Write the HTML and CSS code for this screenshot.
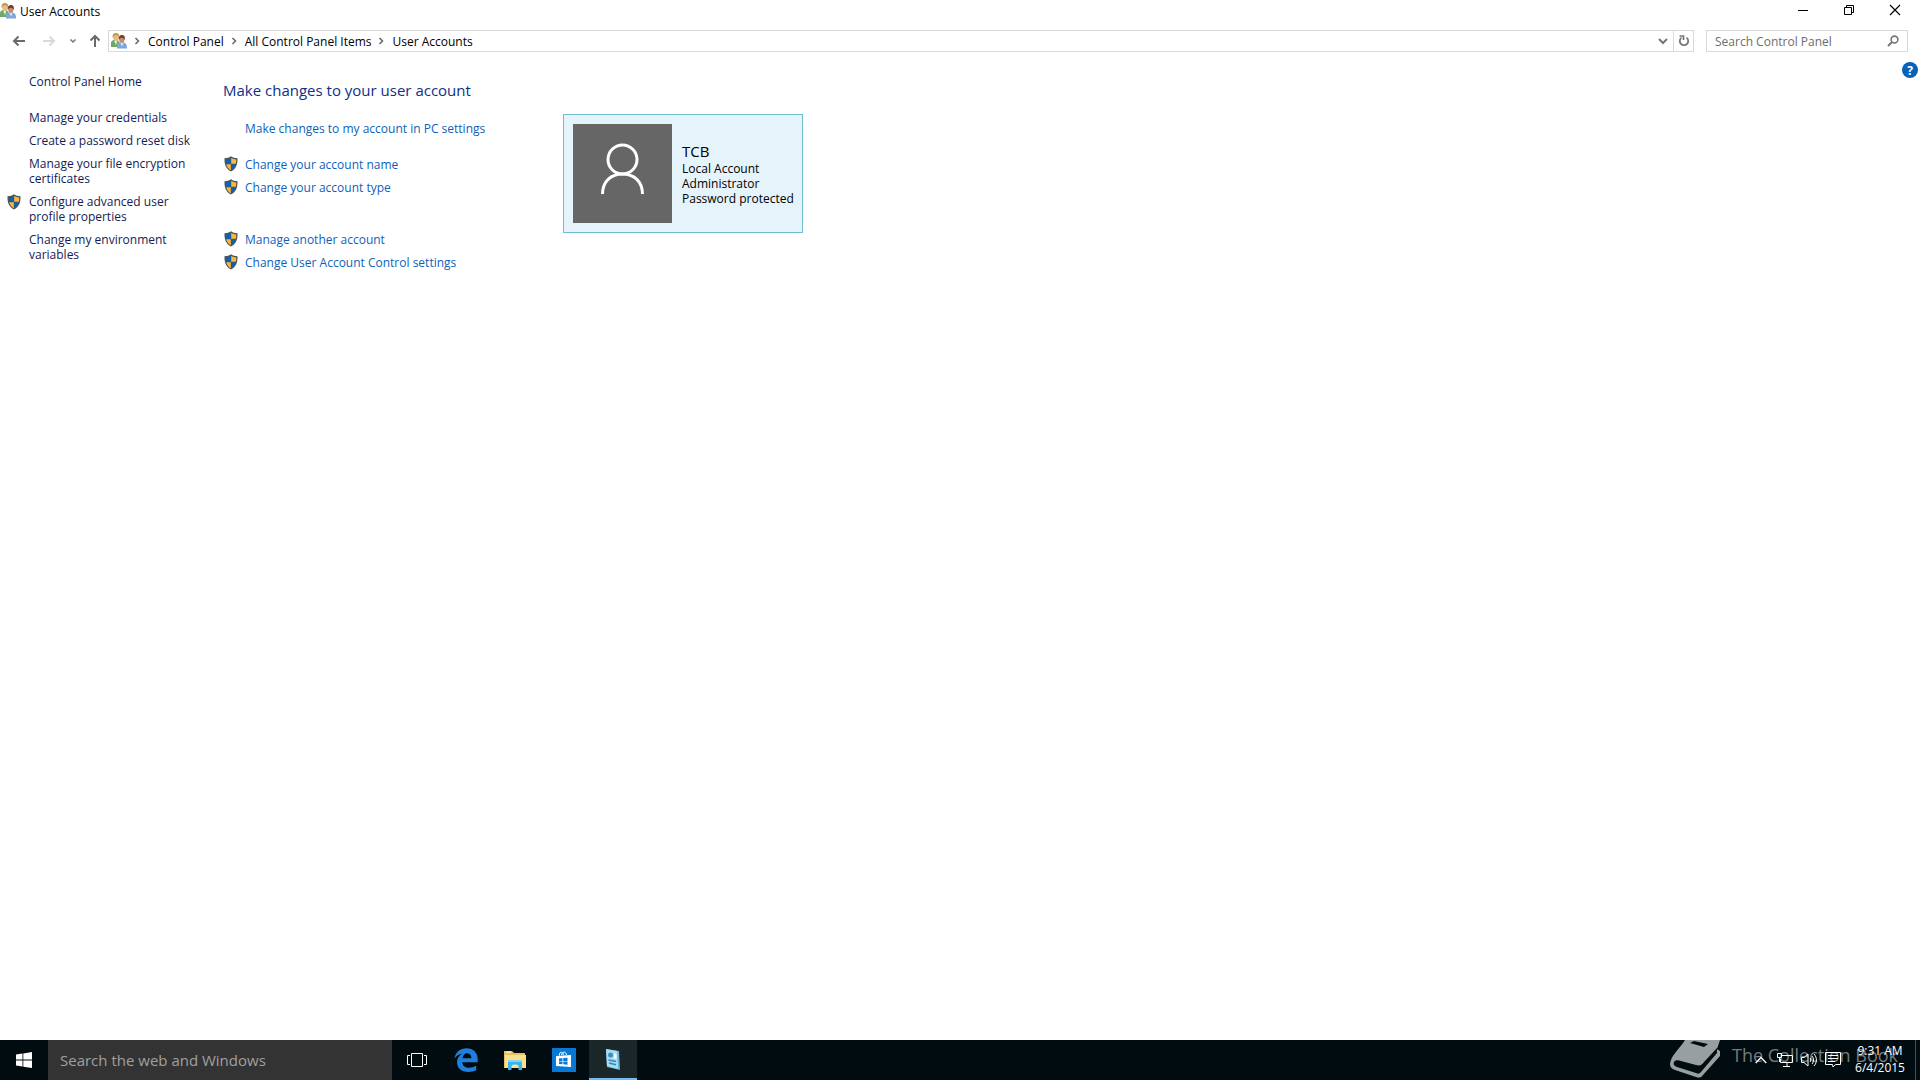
FILE: index.html
```html
<!DOCTYPE html>
<html lang="en">
<head>
<meta charset="utf-8">
<title>User Accounts</title>
<link rel="stylesheet" href="styles.css">
</head>
<body>
<svg class="defs" aria-hidden="true">
  <symbol id="shield" viewBox="0 0 14 16">
    <path d="M7 .3C5.600 1.600 3 2.300.5 2.300C.2 8.500 2 13 7 15.500C12 13 13.800 8.500 13.500 2.300C11 2.300 8.400 1.600 7 .3Z" fill="#4f5554"/>
    <path d="M6.800 2C5.400 2.900 3.500 3.400 1.800 3.500C1.700 5 1.800 6.500 2.200 7.800H6.800Z" fill="#0c62b4"/>
    <path d="M7.200 2C8.600 2.900 10.500 3.400 12.200 3.500C12.300 5 12.200 6.500 11.800 7.800H7.200Z" fill="#fcb63c"/>
    <path d="M2.300 8.200C3 10.900 4.400 12.900 6.800 14.200V8.200Z" fill="#fcb63c"/>
    <path d="M11.700 8.200C11 10.900 9.600 12.900 7.200 14.200V8.200Z" fill="#0c62b4"/>
  </symbol>
  <symbol id="users" viewBox="0 0 16 16">
    <path d="M0 14V9.500C.5 7.500 2.500 6.500 4.500 6.700C7 7 8.500 8 8.500 10V14Z" fill="#70a868"/>
    <path d="M3 7.500L5 12L6.500 7.500Z" fill="#e4efd8"/>
    <ellipse cx="5" cy="4" rx="3" ry="3.700" fill="#e8bd84"/>
    <path d="M1.800 5C1 2 2.600 0 5.200.1C7.600.2 8.700 2 8 4.400C7.500 2.800 6.500 2.200 5 2.300C3.300 2.300 2.300 3.200 1.800 5Z" fill="#c29a42"/>
    <path d="M6 15.500V12C6.500 10 8.500 9.300 11 9.300C14 9.400 16 11 16 14V15.500Z" fill="#7fa5dc"/>
    <path d="M9.400 9.800L11 13.500L12.600 9.800Z" fill="#e2ebf9"/>
    <ellipse cx="10.800" cy="6.500" rx="2.600" ry="3.400" fill="#c98c6a"/>
    <path d="M8 7C7.200 4.200 8.500 2 10.900 2C13.500 2 14.500 4.200 13.600 7.300C13.300 5.500 12.600 4.700 10.500 4.700C9.100 4.900 8.400 5.600 8 7Z" fill="#713e36"/>
  </symbol>
</svg>

<div class="window">
  <header class="titlebar">
    <svg class="ic16" aria-hidden="true"><use href="#users"/></svg>
    <h1 class="title">User Accounts</h1>
    <div class="window-buttons">
      <button class="wbtn" aria-label="Minimize"><svg width="12" height="12"><path d="M1 6.500H11" stroke="#000" fill="none"/></svg></button>
      <button class="wbtn" aria-label="Restore"><svg width="12" height="12"><path d="M1.500 3.500H8.500V10.500H1.500ZM3.500 3.500V1.500H10.500V8.500H8.500" stroke="#000" fill="none"/></svg></button>
      <button class="wbtn" aria-label="Close"><svg width="12" height="12"><path d="M1 1L11 11M11 1L1 11" stroke="#000" stroke-width="1.200" fill="none"/></svg></button>
    </div>
  </header>

  <nav class="navbar" aria-label="Address">
    <div class="history">
      <button class="hbtn back" aria-label="Back"><svg width="14" height="12"><path d="M13 6H2M6.500 1.500L2 6L6.500 10.500" stroke="#6a6a6a" stroke-width="2" fill="none"/></svg></button>
      <button class="hbtn forward" aria-label="Forward"><svg width="14" height="12"><path d="M1 6H12M7.500 1.500L12 6L7.500 10.500" stroke="#d9d9d9" stroke-width="2" fill="none"/></svg></button>
      <button class="hbtn recent" aria-label="Recent locations"><svg width="8" height="6"><path d="M1.500 1.500L4 4L6.500 1.500" stroke="#777" stroke-width="1.500" fill="none"/></svg></button>
      <button class="hbtn up" aria-label="Up"><svg width="12" height="14"><path d="M6 13V2M1.500 6.500L6 2L10.500 6.500" stroke="#6a6a6a" stroke-width="2" fill="none"/></svg></button>
    </div>
    <div class="address">
      <svg class="ic16" aria-hidden="true"><use href="#users"/></svg>
      <svg class="sep" viewBox="0 0 6 8"><path d="M1.500 1L4.500 4L1.500 7"/></svg>
      <a href="#">Control Panel</a>
      <svg class="sep" viewBox="0 0 6 8"><path d="M1.500 1L4.500 4L1.500 7"/></svg>
      <a href="#">All Control Panel Items</a>
      <svg class="sep" viewBox="0 0 6 8"><path d="M1.500 1L4.500 4L1.500 7"/></svg>
      <a href="#">User Accounts</a>
      <button class="abtn drop" aria-label="Previous locations"><svg width="10" height="7"><path d="M1 1L5 5L9 1" stroke="#777" stroke-width="2" fill="none"/></svg></button>
      <button class="abtn refresh" aria-label="Refresh"><svg width="12" height="12"><path d="M8.500 2.600A4.200 4.200 0 1 1 3.500 2.600" stroke="#777" stroke-width="1.800" fill="none"/><path d="M1.500 1H5.500V5" stroke="#777" stroke-width="1.700" fill="none"/></svg></button>
    </div>
    <label class="search">
      <input type="text" placeholder="Search Control Panel" aria-label="Search Control Panel">
      <svg width="12" height="12"><circle cx="7.500" cy="4.500" r="3.400" stroke="#777" stroke-width="1.600" fill="none"/><path d="M5 7L1 11" stroke="#777" stroke-width="2"/></svg>
    </label>
  </nav>

  <div class="content">
    <aside class="sidebar">
      <a class="home" href="#">Control Panel Home</a>
      <ul class="tasks">
        <li><a href="#">Manage your credentials</a></li>
        <li><a href="#">Create a password reset disk</a></li>
        <li><a href="#">Manage your file encryption<br>certificates</a></li>
        <li><svg class="shield" aria-hidden="true"><use href="#shield"/></svg><a href="#">Configure advanced user<br>profile properties</a></li>
        <li><a href="#">Change my environment<br>variables</a></li>
      </ul>
    </aside>
    <main class="main">
      <section class="actions">
        <h2>Make changes to your user account</h2>
        <ul class="links">
          <li><a href="#">Make changes to my account in PC settings</a></li>
        </ul>
        <ul class="links mid">
          <li><svg class="shield" aria-hidden="true"><use href="#shield"/></svg><a href="#">Change your account name</a></li>
          <li><svg class="shield" aria-hidden="true"><use href="#shield"/></svg><a href="#">Change your account type</a></li>
        </ul>
        <ul class="links last">
          <li><svg class="shield" aria-hidden="true"><use href="#shield"/></svg><a href="#">Manage another account</a></li>
          <li><svg class="shield" aria-hidden="true"><use href="#shield"/></svg><a href="#">Change User Account Control settings</a></li>
        </ul>
      </section>
      <section class="card">
        <svg class="avatar" viewBox="0 0 99 99" aria-hidden="true"><path d="M0 0H99V99H0Z" fill="#666"/><g fill="none" stroke="#fff" stroke-width="3"><circle cx="49.500" cy="35.500" r="14.500"/><path d="M29.500 70C29.500 57 38.500 50 49.500 50S69.500 57 69.500 70"/></g></svg>
        <div class="who">
          <h3>TCB</h3>
          <p>Local Account</p>
          <p>Administrator</p>
          <p>Password protected</p>
        </div>
      </section>
    </main>
    <button class="help" aria-label="Help">?</button>
  </div>
</div>

<footer class="taskbar">
  <button class="tbtn" aria-label="Start"><svg width="16" height="16"><path d="M0 2.400L6.500 1.500V7.600H0ZM7.300 1.400L16 0V7.600H7.300ZM0 8.400H6.500V14.500L0 13.600ZM7.300 8.400H16V16L7.300 14.700Z" fill="#fff"/></svg></button>
  <input class="websearch" type="text" placeholder="Search the web and Windows" aria-label="Search the web and Windows">
  <div class="apps">
    <button class="tbtn" aria-label="Task View"><svg width="20" height="14"><path d="M4.500.5H15.500V13.500H4.500ZM3 2.500H.5V11.500H3M17 2.500H19.500V11.500H17" fill="none" stroke="#fff"/></svg></button>
    <button class="tbtn" aria-label="Edge"><svg width="24" height="24" viewBox="0 0 24 24"><path d="M.5 10.500C1.600 3.800 6.500.3 12.500.3C19.300.3 23.700 4.900 23.700 11.300V14.300H8.300C8.600 18.200 11.500 19.800 15.200 19.800C17.800 19.800 20 19.100 22.200 17.800V22.300C19.900 23.500 17.300 24 14.400 24C7.500 24 3 20 3 14.200C3 10.500 5 7.400 8.100 5.700C4.900 6.200 2.300 7.700.5 10.500ZM8.500 10.200H17.400C17.400 7.400 16 5.200 13.200 5.200C10.700 5.200 8.900 7.200 8.500 10.200Z" fill="#1e7fdc"/></svg></button>
    <button class="tbtn" aria-label="File Explorer"><svg width="22" height="20"><path d="M0 1H8L10 3H21V18H0Z" fill="#e9c15c"/><path d="M2 1.500H7V3H2Z" fill="#f9efb5"/><path d="M1 5H22V18H1Z" fill="#fbe08d"/><path d="M4 10H18V20H14.500V16C14.500 14 7.500 14 7.500 16V20H4Z" fill="#38b5ed"/><path d="M4 10H18V12H4Z" fill="#83d4f7"/></svg></button>
    <button class="tbtn" aria-label="Store"><svg width="24" height="24"><path d="M0 0H24V24H0Z" fill="#0878d7"/><path d="M4 8L19 7V19L4 18Z" fill="#fff"/><path d="M7.500 7.500C7 3 11 3.500 11.500 7M9.500 7C10 3.500 14 3 14.500 7" stroke="#fff" fill="none"/><path d="M7 10.500L10.500 10.200V12.900H7ZM11.300 10.100L15.500 9.700V12.900H11.300ZM7 13.600H10.500V16.300L7 16ZM11.300 13.600H15.500V16.700L11.300 16.300Z" fill="#0878d7"/></svg></button>
    <button class="tbtn active" aria-label="User Accounts"><svg width="16" height="22"><path d="M1 1L14 3L15 22L2 19Z" fill="#6bb6d8"/><path d="M1 1L12 3L13 21L2 18Z" fill="#a9dcf0"/><circle cx="5.500" cy="7" r="2.500" fill="#398fc4"/><path d="M9 5.500L11.500 6V11L9 10.500Z" fill="#f6fbff"/><path d="M3.500 12L11 13.500M4 15L11 16.700" stroke="#3187b8" stroke-width="1.500"/></svg></button>
  </div>
  <div class="tray">
    <button class="tray-btn" aria-label="Show hidden icons"><svg width="12" height="8"><path d="M.7 7L6 1.500L11.300 7" stroke="#fff" stroke-width="1.300" fill="none"/></svg></button>
    <button class="tray-btn" aria-label="Network"><svg width="16" height="14"><path d="M4.500 2.500H15.500V9.500H3.500V6M10 10V13M6 13.500H13M.5.500H4.500V4.500H.5ZM2.500 5V9" stroke="#fff" fill="none"/></svg></button>
    <button class="tray-btn" aria-label="Volume"><svg width="16" height="14"><path d="M.5 4.500H3L7 1V13L3 9.500H.5ZM9 5C10 6.200 10 7.800 9 9M11 3C13 5.300 13 8.700 11 11M13 1C16.200 4.500 16.200 9.500 13 13" stroke="#fff" fill="none"/></svg></button>
    <button class="tray-btn" aria-label="Notifications"><svg width="16" height="16"><path d="M.5.500H15.500V12.500H10.500L8 15L7.500 12.500H.5ZM3 3.500H13M3 6.500H13M3 9.500H10" stroke="#fff" fill="none"/></svg></button>
    <div class="clock"><time>9:31 AM</time><time>6/4/2015</time></div>
    <button class="desktop" aria-label="Show desktop"></button>
  </div>
  <div class="watermark">
    <svg width="52" height="40" viewBox="0 0 52 40"><path d="M15 0H50L47 9L50 11V16L33 35C31 38 29 38 26 37L5 30C0 28-1 25 1 20C3 14 10 8 15 0Z" fill="#999fa0"/><path d="M4 22C5 20 8 20 11 21L26 25C30 26 32 25 34 22L47 8V13L31 32C29 34 28 34 26 33L7 27C4 26 3 24 4 22Z" fill="#000c0f"/><path d="M50 0V3L47 9L51 11V0Z" fill="#000c0f"/><path d="M20 3L24 1L38 4L34 7Z" fill="#000c0f"/></svg>
    <span>The Collection Book</span>
  </div>
</footer>
</body>
</html>
```
FILE: styles.css
```css
* { box-sizing: border-box; }
html, body { height: 100%; }
body {
  margin: 0;
  display: flex;
  flex-direction: column;
  background: #fff;
  color: #000;
  font: 12px/15px "Open Sans", "Noto Sans", sans-serif;
}
h1, h2, h3, p, ul { margin: 0; padding: 0; font-weight: 400; }
ul { list-style: none; }
a { color: inherit; text-decoration: none; }
button { border: 0; padding: 0; background: none; font: inherit; color: inherit; display: flex; align-items: center; justify-content: center; }
input { border: 0; padding: 0; background: none; font: inherit; outline: 0; min-width: 0; }
svg { display: block; flex: none; }
.defs { position: absolute; width: 0; height: 0; }
.ic16 { width: 16px; height: 16px; }
.shield { width: 14px; height: 16px; }

.window { flex: 1; display: flex; flex-direction: column; }

.titlebar { display: flex; align-items: center; height: 22px; }
.title { font-size: 12px; margin-left: 4px; }
.window-buttons { display: flex; margin-left: auto; margin-right: 2px; }
.wbtn { width: 46px; height: 20px; margin-bottom: 2px; }

.navbar { display: flex; align-items: center; padding: 8px 12px 0 0; height: 30px; }
.history { display: flex; align-items: center; width: 108px; padding-left: 12px; }
.hbtn { height: 20px; }
.forward { margin-left: 16px; }
.recent { margin-left: 13px; }
.up { margin-left: 12px; }
.address { flex: 1; display: flex; align-items: center; height: 22px; border: 1px solid #d9d9d9; padding-left: 2px; }
.sep { width: 6px; height: 8px; margin: 0 8px 0 7px; fill: none; stroke: #666; stroke-width: 1.500; }
.abtn { width: 20px; height: 20px; }
.drop { margin-left: auto; }
.refresh { border-left: 1px solid #d9d9d9; }
.search { display: flex; align-items: center; width: 202px; height: 22px; margin-left: 12px; padding: 0 8px; border: 1px solid #d9d9d9; }
.search input { flex: 1; }
.search input::placeholder { color: #6d6d6d; opacity: 1; }

.content { flex: 1; display: flex; align-items: flex-start; }
.sidebar { width: 223px; padding: 22px 0 0 29px; color: #151c55; }
.home { display: block; margin-bottom: 21px; }
.tasks { display: flex; flex-direction: column; gap: 8px; }
.tasks li { display: flex; }
.tasks .shield { margin-left: -22px; margin-right: 8px; }

.main { display: flex; align-items: flex-start; flex: 1; }
.actions { width: 340px; padding-top: 26px; color: #0f5fb8; }
.actions h2 { font-size: 15px; line-height: 24px; color: #0f2f87; margin-bottom: 18px; }
.links { display: flex; flex-direction: column; gap: 7px; padding-left: 22px; }
.links li { display: flex; align-items: center; height: 16px; }
.links .shield { margin-left: -21px; margin-right: 7px; }
.mid { margin-top: 20px; }
.last { margin-top: 36px; }
.card { display: flex; align-items: center; width: 240px; height: 119px; margin-top: 62px; padding-left: 9px; border: 1px solid #70bcd1; background: #e5f3fb; }
.avatar { width: 99px; height: 99px; }
.who { margin-left: 10px; }
.who h3 { font-size: 15px; line-height: 20px; }
.help { width: 16px; height: 16px; margin: 10px 2px 0 0; border-radius: 50%; background: #0663b8; color: #fff; font-weight: 700; }

.taskbar { position: relative; display: flex; height: 40px; background: #000c0f; color: #fff; }
.tbtn { width: 48px; height: 40px; }
.websearch { width: 344px; padding-left: 12px; background: #333; font-size: 15px; }
.websearch::placeholder { color: #a0a0a0; opacity: 1; }
.apps { display: flex; gap: 1px; padding-left: 1px; }
.active { background: #1b2628; border-bottom: 2px solid #76b9ed; }
.tray { position: relative; z-index: 1; display: flex; align-items: center; margin-left: auto; }
.tray-btn { width: 24px; height: 40px; }
.clock { display: flex; flex-direction: column; align-items: center; width: 70px; line-height: 17px; padding-bottom: 2px; }
.desktop { width: 5px; height: 40px; border-left: 1px solid #465053; }
.watermark { position: absolute; right: 22px; bottom: 0; display: flex; align-items: center; height: 40px; color: #757c7e; font-size: 18px; }
.watermark svg { margin-right: 10px; }
.watermark span { padding-bottom: 10px; }
```
